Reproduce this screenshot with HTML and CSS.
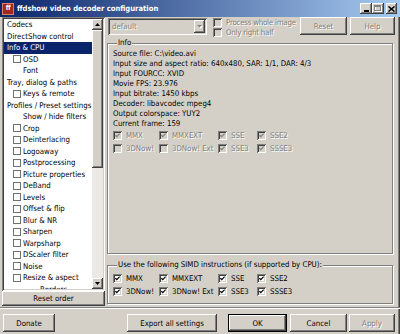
FILE: index.html
```html
<!DOCTYPE html>
<html lang="en">
<head>
    <meta charset="UTF-8">
    <title>ffdshow video decoder configuration</title>
    <link rel="stylesheet" href="styles.css">
</head>
<body>
    <div class="window">
        <div class="titlebar">
            <span class="app-icon">ff</span>
            <span class="title">ffdshow video decoder configuration</span>
            <div class="caption-buttons">
                <span class="cap-btn min"><svg width="5" height="2"><rect width="5" height="2" fill="#000"/></svg></span>
                <span class="cap-btn max"><svg width="8" height="7"><rect x="1.5" y="1.5" width="6" height="5" fill="none" stroke="#fff"/><rect x="0.5" y="0.5" width="6" height="5" fill="none" stroke="#808080"/><rect x="0" y="0" width="7" height="2" fill="#808080"/></svg></span>
                <span class="cap-btn close"><svg width="7" height="6"><path d="M0.5 0.5l6 5M6.5 0.5l-6 5" stroke="#000" stroke-width="1.5"/></svg></span>
            </div>
        </div>

        <div class="main">
            <div class="sidebar">
                <div class="tree">
                    <ul class="tree-items">
                        <li>Codecs</li>
                        <li>DirectShow control</li>
                        <li class="selected">Info &amp; CPU</li>
                        <li class="child"><span class="tree-cb"></span>OSD</li>
                        <li class="indent">Font</li>
                        <li>Tray, dialog &amp; paths</li>
                        <li class="child"><span class="tree-cb"></span>Keys &amp; remote</li>
                        <li>Profiles / Preset settings</li>
                        <li class="indent">Show / hide filters</li>
                        <li class="child"><span class="tree-cb"></span>Crop</li>
                        <li class="child"><span class="tree-cb"></span>Deinterlacing</li>
                        <li class="child"><span class="tree-cb"></span>Logoaway</li>
                        <li class="child"><span class="tree-cb"></span>Postprocessing</li>
                        <li class="child"><span class="tree-cb"></span>Picture properties</li>
                        <li class="child"><span class="tree-cb"></span>DeBand</li>
                        <li class="child"><span class="tree-cb"></span>Levels</li>
                        <li class="child"><span class="tree-cb"></span>Offset &amp; flip</li>
                        <li class="child"><span class="tree-cb"></span>Blur &amp; NR</li>
                        <li class="child"><span class="tree-cb"></span>Sharpen</li>
                        <li class="child"><span class="tree-cb"></span>Warpsharp</li>
                        <li class="child"><span class="tree-cb"></span>DScaler filter</li>
                        <li class="child"><span class="tree-cb"></span>Noise</li>
                        <li class="child"><span class="tree-cb"></span>Resize &amp; aspect</li>
                        <li class="sub">Borders</li>
                    </ul>
                    <div class="scrollbar">
                        <span class="sb-btn"><svg width="5" height="3"><path d="M2.5 0L5 3H0z" fill="#000"/></svg></span>
                        <span class="sb-thumb"></span>
                        <span class="sb-track"></span>
                        <span class="sb-btn"><svg width="5" height="3"><path d="M0 0h5L2.5 3z" fill="#000"/></svg></span>
                    </div>
                </div>
                <button class="btn reset-order">Reset order</button>
            </div>

            <div class="content">
                <div class="toolbar">
                    <div class="combo">
                        <span class="combo-value disabled">default</span>
                        <span class="combo-arrow"><svg width="6" height="4"><path d="M1 1h5L3.5 3.5z" fill="#fff"/><path d="M0 0h5L2.5 2.5z" fill="#808080"/></svg></span>
                    </div>
                    <div class="preset-opts">
                        <label class="check disabled"><span class="cb off"></span>Process whole image</label>
                        <label class="check disabled"><span class="cb off"></span>Only right half</label>
                    </div>
                    <button class="btn tb-reset disabled">Reset</button>
                    <button class="btn tb-help disabled">Help</button>
                </div>

                <fieldset class="group info">
                    <legend>Info</legend>
                    <div class="info-lines">
                        <div>Source file: C:\video.avi</div>
                        <div>Input size and aspect ratio: 640x480, SAR: 1/1, DAR: 4/3</div>
                        <div>Input FOURCC: XVID</div>
                        <div>Movie FPS: 23.976</div>
                        <div>Input bitrate: 1450 kbps</div>
                        <div>Decoder: libavcodec mpeg4</div>
                        <div>Output colorspace: YUY2</div>
                        <div>Current frame: 159</div>
                    </div>
                    <div class="cpu-flags disabled">
                        <label class="check"><span class="cb off"><svg width="5" height="5" viewBox="0 0 7 7"><path d="M0.5 3l2 2.2 4-4.4"/></svg></span>MMX</label>
                        <label class="check"><span class="cb off"><svg width="5" height="5" viewBox="0 0 7 7"><path d="M0.5 3l2 2.2 4-4.4"/></svg></span>MMXEXT</label>
                        <label class="check"><span class="cb off"><svg width="5" height="5" viewBox="0 0 7 7"><path d="M0.5 3l2 2.2 4-4.4"/></svg></span>SSE</label>
                        <label class="check"><span class="cb off"><svg width="5" height="5" viewBox="0 0 7 7"><path d="M0.5 3l2 2.2 4-4.4"/></svg></span>SSE2</label>
                        <label class="check"><span class="cb off"></span>3DNow!</label>
                        <label class="check"><span class="cb off"></span>3DNow! Ext</label>
                        <label class="check"><span class="cb off"><svg width="5" height="5" viewBox="0 0 7 7"><path d="M0.5 3l2 2.2 4-4.4"/></svg></span>SSE3</label>
                        <label class="check"><span class="cb off"><svg width="5" height="5" viewBox="0 0 7 7"><path d="M0.5 3l2 2.2 4-4.4"/></svg></span>SSSE3</label>
                    </div>
                </fieldset>

                <fieldset class="group simd">
                    <legend>Use the following SIMD instructions (if supported by CPU):</legend>
                    <div class="cpu-flags">
                        <label class="check"><span class="cb"><svg width="5" height="5" viewBox="0 0 7 7"><path d="M0.5 3l2 2.2 4-4.4"/></svg></span>MMX</label>
                        <label class="check"><span class="cb"><svg width="5" height="5" viewBox="0 0 7 7"><path d="M0.5 3l2 2.2 4-4.4"/></svg></span>MMXEXT</label>
                        <label class="check"><span class="cb"><svg width="5" height="5" viewBox="0 0 7 7"><path d="M0.5 3l2 2.2 4-4.4"/></svg></span>SSE</label>
                        <label class="check"><span class="cb"><svg width="5" height="5" viewBox="0 0 7 7"><path d="M0.5 3l2 2.2 4-4.4"/></svg></span>SSE2</label>
                        <label class="check"><span class="cb"><svg width="5" height="5" viewBox="0 0 7 7"><path d="M0.5 3l2 2.2 4-4.4"/></svg></span>3DNow!</label>
                        <label class="check"><span class="cb"><svg width="5" height="5" viewBox="0 0 7 7"><path d="M0.5 3l2 2.2 4-4.4"/></svg></span>3DNow! Ext</label>
                        <label class="check"><span class="cb"><svg width="5" height="5" viewBox="0 0 7 7"><path d="M0.5 3l2 2.2 4-4.4"/></svg></span>SSE3</label>
                        <label class="check"><span class="cb"><svg width="5" height="5" viewBox="0 0 7 7"><path d="M0.5 3l2 2.2 4-4.4"/></svg></span>SSSE3</label>
                    </div>
                </fieldset>
            </div>
        </div>

        <div class="footer">
            <button class="btn donate">Donate</button>
            <div class="footer-actions">
                <button class="btn export">Export all settings</button>
                <button class="btn ok">OK</button>
                <button class="btn cancel">Cancel</button>
                <button class="btn apply disabled">Apply</button>
            </div>
        </div>
    </div>
</body>
</html>
```

FILE: styles.css
```css
body {
    margin: 0;
    background: #d4d0c8;
    font-family: "DejaVu Sans Condensed", "Liberation Sans", sans-serif;
    font-size: 7.8px;
    color: #000;
}

.window {
    width: 400px;
    height: 334px;
    display: flex;
    flex-direction: column;
    overflow: hidden;
    background: #d4d0c8;
    box-shadow: inset -1px 0 #404040, inset -2px 0 #808080;
}

/* title bar */

.titlebar {
    flex: none;
    height: 17px;
    display: flex;
    align-items: center;
    padding: 0 3px 0 2px;
    background: linear-gradient(to right, #0a246a, #a6caf0);
    color: #fff;
}

.app-icon {
    width: 12px;
    height: 12px;
    box-sizing: border-box;
    background: #a3261c;
    border: 1px solid #d8806a;
    font-size: 7px;
    font-weight: bold;
    line-height: 9px;
    text-align: center;
    letter-spacing: -0.5px;
}

.title {
    margin-left: 3px;
    font-weight: bold;
    font-size: 7.6px;
}

.caption-buttons {
    margin-left: auto;
    display: flex;
}

.cap-btn {
    width: 12px;
    height: 11px;
    display: flex;
    justify-content: center;
    align-items: center;
    background: #d4d0c8;
    box-shadow: inset -1px -1px #404040, inset 1px 1px #fff, inset -2px -2px #808080;
}

.cap-btn.min {
    align-items: flex-end;
    padding-bottom: 2px;
    box-sizing: border-box;
}

.cap-btn.close {
    width: 11px;
    margin-left: 2px;
}

/* shared controls */

.btn {
    font: inherit;
    color: #000;
    background: #d4d0c8;
    border: 0;
    padding: 0;
    height: 18px;
    box-shadow: inset -1px -1px #404040, inset 1px 1px #fff, inset -2px -2px #808080;
}

.disabled {
    color: #808080;
    text-shadow: 1px 1px 0 #fff;
}

.check {
    display: flex;
    align-items: center;
    gap: 4px;
    white-space: nowrap;
}

.cb {
    flex: none;
    width: 9px;
    height: 9px;
    box-sizing: border-box;
    display: flex;
    justify-content: center;
    align-items: center;
    background: #fff;
    box-shadow: inset 1px 1px #808080, inset -1px -1px #fff, inset 2px 2px #404040, inset -2px -2px #d4d0c8;
}

.cb svg {
    fill: none;
    stroke: #000;
    stroke-width: 1.7;
}

.cb.off {
    background: #d4d0c8;
}

.cb.off svg {
    stroke: #808080;
}

/* main area */

.main {
    flex: none;
    height: 290px;
    display: flex;
    padding: 0 5px 0 2px;
}

.sidebar {
    width: 103px;
    display: flex;
    flex-direction: column;
}

.tree {
    height: 274px;
    box-sizing: border-box;
    padding: 2px;
    display: flex;
    box-shadow: inset 1px 1px #808080, inset -1px -1px #fff, inset 2px 2px #404040, inset -2px -2px #d4d0c8;
}

.tree-items {
    flex: 1;
    margin: 0;
    padding: 0;
    list-style: none;
    background: #fff;
    overflow: hidden;
}

.tree-items li {
    height: 11.5px;
    line-height: 11.5px;
    display: flex;
    align-items: center;
    padding-left: 3px;
    white-space: nowrap;
}

.tree-items li.selected {
    background: #0a246a;
    color: #fff;
}

.tree-items li.child {
    padding-left: 9px;
}

.tree-items li.indent {
    padding-left: 19px;
}

.tree-items li.sub {
    padding-left: 36px;
}

.tree-cb {
    width: 8px;
    height: 8px;
    box-sizing: border-box;
    margin-right: 2px;
    border: 1px solid #707070;
    background: #fff;
}

.scrollbar {
    width: 11px;
    display: flex;
    flex-direction: column;
}

.sb-btn {
    height: 11px;
    flex: none;
    display: flex;
    justify-content: center;
    align-items: center;
    background: #d4d0c8;
    box-shadow: inset -1px -1px #404040, inset 1px 1px #fff, inset -2px -2px #808080;
}

.sb-thumb {
    height: 138px;
    flex: none;
    background: #d4d0c8;
    box-shadow: inset -1px -1px #404040, inset 1px 1px #fff, inset -2px -2px #808080;
}

.sb-track {
    flex: 1;
    background: #ebe9e5;
}

.reset-order {
    height: 15px;
}

.content {
    flex: 1;
    margin-left: 2px;
    display: flex;
    flex-direction: column;
}

.toolbar {
    height: 18px;
    display: flex;
    align-items: flex-start;
}

.combo {
    width: 99px;
    height: 17px;
    margin: 1px 0 0 1px;
    box-sizing: border-box;
    padding: 2px;
    display: flex;
    align-items: center;
    box-shadow: inset 1px 1px #808080, inset -1px -1px #fff, inset 2px 2px #404040, inset -2px -2px #d4d0c8;
}

.combo-value {
    flex: 1;
    padding-left: 2px;
}

.combo-arrow {
    width: 11px;
    height: 13px;
    display: flex;
    justify-content: center;
    align-items: center;
    box-shadow: inset -1px -1px #404040, inset 1px 1px #fff, inset -2px -2px #808080;
}

.preset-opts {
    width: 81px;
    margin-left: 6px;
    display: flex;
    flex-direction: column;
    letter-spacing: -0.2px;
}

.preset-opts .check {
    height: 10px;
}

.tb-reset {
    width: 47px;
    margin-left: 6px;
}

.tb-help {
    width: 45px;
    margin-left: 3px;
}

/* group boxes */

.group {
    margin: 0;
    width: 286px;
    box-sizing: border-box;
    border: 1px solid #808080;
    box-shadow: inset 1px 1px #fff, 1px 1px #fff;
    display: flex;
    flex-direction: column;
}

.group legend {
    margin-left: 4px;
    padding: 0 1px;
    line-height: 10px;
    background: #d4d0c8;
}

.info {
    margin-top: 3px;
    height: 216px;
    padding: 1px 4px 1px 5px;
}

.info-lines div {
    line-height: 10px;
    white-space: nowrap;
}

.cpu-flags {
    display: grid;
    grid-template-columns: 46px 59px 39px auto;
    grid-auto-rows: 13px;
    align-items: center;
}

.info .cpu-flags {
    margin-top: auto;
}

.simd {
    margin-top: 6px;
    height: 44px;
    padding: 2px 4px 3px 5px;
}

/* footer */

.footer {
    flex: none;
    display: flex;
    padding: 6px 5px 0 3px;
    border-top: 1px solid #808080;
    box-shadow: inset 0 1px #fff;
}

.donate {
    width: 52px;
}

.footer-actions {
    margin-left: auto;
    display: flex;
}

.export {
    width: 90px;
    margin-right: 11px;
}

.ok {
    width: 59px;
    box-shadow: inset 0 0 0 1px #000, inset -2px -2px #404040, inset 2px 2px #fff, inset -3px -3px #808080;
}

.cancel {
    width: 57px;
    margin-left: 3px;
}

.apply {
    width: 46px;
    margin-left: 2px;
}
```
